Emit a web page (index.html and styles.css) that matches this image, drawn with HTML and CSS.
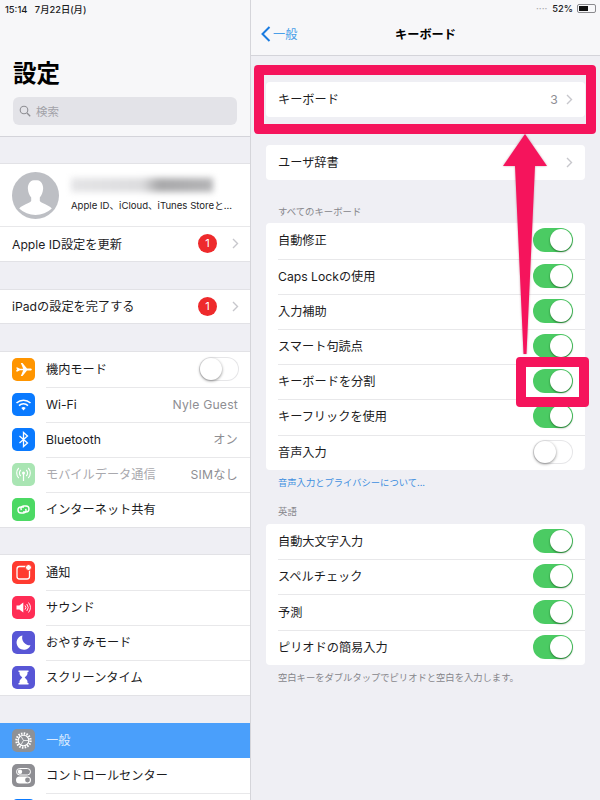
FILE: index.html
```html
<!DOCTYPE html>
<html lang="ja">
<head>
    <meta charset="UTF-8">
    <meta name="viewport" content="width=device-width, initial-scale=1.0">
    <title>キーボード</title>
    <link rel="stylesheet" href="styles.css">
</head>
<body>
<div class="screen">
    <div class="sidebar">
        <div class="sideHead">
            <div class="status">15:14 &nbsp; 7月22日(月)</div>
            <h1>設定</h1>
            <div class="search">
                <svg width="12" height="12" viewBox="0 0 12 12"><circle cx="5" cy="5" r="3.8" fill="none" stroke="#8e8e93" stroke-width="1.1"/><path d="M8 8l3.2 3.2" stroke="#8e8e93" stroke-width="1.3"/></svg>
                <span>検索</span>
            </div>
        </div>

        <div class="group first">
            <div class="profile">
                <svg class="avatar" width="47" height="47" viewBox="0 0 47 47">
                    <circle cx="23.5" cy="23.5" r="23.5" fill="#bdbfc4"/>
                    <path d="M23.5 8c-5.2 0-8 4-7.6 9 .3 3.400 1.500 6.500 3.300 8.500v3.500c-1 2-8.500 3.500-12 7.500a23.500 23.500 0 0 0 32.600 0c-3.500-4-11-5.500-12-7.500v-3.500c1.800-2 3-5.100 3.300-8.500.4-5-2.400-9-7.600-9z" fill="#fff"/>
                </svg>
                <div class="profileText">
                    <div class="blurName"></div>
                    <div class="profileSub">Apple ID、iCloud、iTunes Storeと...</div>
                </div>
            </div>
            <div class="row plain">
                <span class="label">Apple ID設定を更新</span>
                <span class="badge">1</span>
                <svg class="chev" width="7" height="11" viewBox="0 0 7 11"><path d="M1 1l4.500 4.500L1 10" fill="none" stroke="#c7c7cc" stroke-width="1.4"/></svg>
            </div>
        </div>

        <div class="group g2">
            <div class="row plain">
                <span class="label">iPadの設定を完了する</span>
                <span class="badge">1</span>
                <svg class="chev" width="7" height="11" viewBox="0 0 7 11"><path d="M1 1l4.500 4.500L1 10" fill="none" stroke="#c7c7cc" stroke-width="1.4"/></svg>
            </div>
        </div>

        <div class="group g3">
            <div class="row">
                <svg class="ico" viewBox="0 0 23 23"><rect width="23" height="23" rx="5" fill="#ff9500"/><path d="M4 10l1-.8 3 1.600 3.200-.1L8.800 5h1.700l4.500 5.500 3-.1c1.300 0 1.800.6 1.800 1.100s-.5 1.100-1.800 1.100l-3-.1L10.500 18H8.800l2.400-5.700-3.200-.1-3 1.600-1-.8 1.200-2z" fill="#fff"/></svg>
                <span class="label">機内モード</span>
                <span class="toggle off"></span>
            </div>
            <div class="row">
                <svg class="ico" viewBox="0 0 23 23"><rect width="23" height="23" rx="5" fill="#0a7aff"/><g fill="none" stroke="#fff" stroke-width="1.500"><path d="M4.500 10a10 10 0 0 1 14 0"/><path d="M7 12.600a6.500 6.500 0 0 1 9 0"/></g><path d="M9.300 15a3.200 3.200 0 0 1 4.400 0l-2.200 2.400z" fill="#fff"/></svg>
                <span class="label">Wi-Fi</span>
                <span class="value">Nyle Guest</span>
            </div>
            <div class="row">
                <svg class="ico" viewBox="0 0 23 23"><rect width="23" height="23" rx="5" fill="#0a7aff"/><path d="M7.500 8l8 7-4 3.500v-14l4 3.500-8 7" fill="none" stroke="#fff" stroke-width="1.300"/></svg>
                <span class="label">Bluetooth</span>
                <span class="value">オン</span>
            </div>
            <div class="row">
                <svg class="ico" viewBox="0 0 23 23"><rect width="23" height="23" rx="5" fill="#a9e5b3"/><circle cx="11.500" cy="10" r="1.500" fill="#fff"/><path d="M11.500 11v7" stroke="#fff" stroke-width="1.200"/><g fill="none" stroke="#fff" stroke-width="1.100"><path d="M8.800 13a4 4 0 0 1 0-6M14.200 7a4 4 0 0 1 0 6M6.800 15a7 7 0 0 1 0-10M16.200 5a7 7 0 0 1 0 10"/></g></svg>
                <span class="label dim">モバイルデータ通信</span>
                <span class="value">SIMなし</span>
            </div>
            <div class="row">
                <svg class="ico" viewBox="0 0 23 23"><rect width="23" height="23" rx="5" fill="#4cd964"/><g fill="none" stroke="#fff" stroke-width="1.400"><path d="M12 9H9a3 3 0 0 0 0 6h2.500a2.500 2.500 0 0 0 2-4"/><path d="M11 14h3a3 3 0 0 0 0-6h-2.500a2.500 2.500 0 0 0-2 4"/></g></svg>
                <span class="label">インターネット共有</span>
            </div>
        </div>

        <div class="group g4">
            <div class="row">
                <svg class="ico" viewBox="0 0 23 23"><rect width="23" height="23" rx="5" fill="#ff3b30"/><rect x="5" y="5.500" width="12.500" height="12.500" rx="2.500" fill="none" stroke="#fff" stroke-width="1.300"/><circle cx="16.500" cy="6.500" r="3" fill="#fff" stroke="#ff3b30"/></svg>
                <span class="label">通知</span>
            </div>
            <div class="row">
                <svg class="ico" viewBox="0 0 23 23"><rect width="23" height="23" rx="5" fill="#ff2d55"/><path d="M4.500 9.500h2.800l4-3v10l-4-3H4.500z" fill="#fff"/><g fill="none" stroke="#fff" stroke-width=".9"><path d="M13 9.500a3 3 0 0 1 0 4M14.800 8a5.500 5.500 0 0 1 0 7M16.500 6.500a8 8 0 0 1 0 10"/></g></svg>
                <span class="label">サウンド</span>
            </div>
            <div class="row">
                <svg class="ico" viewBox="0 0 23 23"><rect width="23" height="23" rx="5" fill="#5856d6"/><path d="M10.500 4.500a7.200 7.200 0 1 0 8 9.700A7.500 7.500 0 0 1 10.500 4.500z" fill="#fff"/></svg>
                <span class="label">おやすみモード</span>
            </div>
            <div class="row">
                <svg class="ico" viewBox="0 0 23 23"><rect width="23" height="23" rx="5" fill="#5856d6"/><path d="M6.500 4.500h10v1.500h-1v1.500c0 2-2.200 3-2.800 4 .6 1 2.800 2 2.800 4v1.500h1v1.500h-10V17h1v-1.500c0-2 2.200-3 2.800-4-.6-1-2.800-2-2.800-4V6h-1z" fill="#fff"/></svg>
                <span class="label">スクリーンタイム</span>
            </div>
        </div>

        <div class="group g5">
            <div class="row selected">
                <svg class="ico" viewBox="0 0 23 23"><rect width="23" height="23" rx="5" fill="#8e9196"/><circle cx="11.500" cy="11.500" r="7" fill="none" stroke="#fff" stroke-width="2.400" stroke-dasharray="1.500 1.250"/><circle cx="11.500" cy="11.500" r="5.300" fill="none" stroke="#fff" stroke-width="1.100"/><path d="M11.500 11.500L9 7.300M11.500 11.500L9 15.700M11.500 11.500h5" stroke="#fff" stroke-width=".8"/></svg>
                <span class="label">一般</span>
            </div>
            <div class="row">
                <svg class="ico" viewBox="0 0 23 23"><rect width="23" height="23" rx="5" fill="#8e8e93"/><rect x="4.500" y="4.500" width="14" height="6.500" rx="3.250" fill="none" stroke="#fff"/><circle cx="8" cy="7.750" r="2.200" fill="#fff"/><rect x="4" y="12.500" width="15" height="7" rx="3.500" fill="#fff"/><circle cx="15.500" cy="16" r="2.400" fill="#8e8e93"/></svg>
                <span class="label">コントロールセンター</span>
            </div>
            <div class="row">
                <svg class="ico" viewBox="0 0 23 23"><rect width="23" height="23" rx="5" fill="#0a7aff"/></svg>
            </div>
        </div>
    </div>

    <div class="detail">
        <div class="navBar">
            <div class="statusRight">
                <span class="dots">····</span>
                <span>52%</span>
                <span class="battery"><span class="batteryFill"></span></span>
            </div>
            <div class="navMain">
                <div class="back">
                    <svg width="10" height="16" viewBox="0 0 10 16"><path d="M8.500 1L1.500 8l7 7" fill="none" stroke="#1a7be0" stroke-width="2"/></svg>
                    <span>一般</span>
                </div>
                <div class="navTitle">キーボード</div>
            </div>
        </div>

        <div class="content">
            <div class="card">
                <div class="row">
                    <span class="label">キーボード</span>
                    <span class="value">3</span>
                    <svg class="chev" width="7" height="11" viewBox="0 0 7 11"><path d="M1 1l4.500 4.500L1 10" fill="none" stroke="#c7c7cc" stroke-width="1.400"/></svg>
                </div>
            </div>
            <div class="card dict">
                <div class="row">
                    <span class="label">ユーザ辞書</span>
                    <svg class="chev" width="7" height="11" viewBox="0 0 7 11"><path d="M1 1l4.500 4.500L1 10" fill="none" stroke="#c7c7cc" stroke-width="1.400"/></svg>
                </div>
            </div>

            <div class="sectionHead">すべてのキーボード</div>
            <div class="card">
                <div class="row"><span class="label">自動修正</span><span class="toggle"></span></div>
                <div class="row"><span class="label">Caps Lockの使用</span><span class="toggle"></span></div>
                <div class="row"><span class="label">入力補助</span><span class="toggle"></span></div>
                <div class="row"><span class="label">スマート句読点</span><span class="toggle"></span></div>
                <div class="row"><span class="label">キーボードを分割</span><span class="toggle"></span></div>
                <div class="row"><span class="label">キーフリックを使用</span><span class="toggle"></span></div>
                <div class="row"><span class="label">音声入力</span><span class="toggle off"></span></div>
            </div>
            <div class="sectionFoot link">音声入力とプライバシーについて...</div>

            <div class="sectionHead en">英語</div>
            <div class="card">
                <div class="row"><span class="label">自動大文字入力</span><span class="toggle"></span></div>
                <div class="row"><span class="label">スペルチェック</span><span class="toggle"></span></div>
                <div class="row"><span class="label">予測</span><span class="toggle"></span></div>
                <div class="row"><span class="label">ピリオドの簡易入力</span><span class="toggle"></span></div>
            </div>
            <div class="sectionFoot">空白キーをダブルタップでピリオドと空白を入力します。</div>
        </div>
    </div>

    <!-- red annotations over the screenshot -->
    <div class="markBig"></div>
    <div class="markSmall"></div>
    <svg class="arrow" width="60" height="240" viewBox="0 0 60 240">
        <path d="M30 1L52 33H40L31.500 221h-3L20 33H8z" fill="#f5145c"/>
    </svg>
</div>
</body>
</html>
```

FILE: styles.css
```css
* {
    margin: 0;
    padding: 0;
    box-sizing: border-box;
}
body {
    font-family: Inter, "Noto Sans CJK JP", sans-serif;
    font-size: 12.2px;
    color: #1c1c1e;
    background: #efeff4;
}
.screen {
    position: relative;
    display: flex;
    width: 600px;
    height: 800px;
    overflow: hidden;
}

/* left column */
.sidebar {
    width: 251px;
    height: 800px;
    flex-shrink: 0;
    background: #efeff4;
    border-right: 1px solid #d5d5da;
}
.sideHead {
    height: 137px;
    padding: 4px 13px 0 13px;
    background: #f7f7f9;
    border-bottom: 1px solid #d4d4da;
}
.status {
    margin-left: -8px;
    font-size: 9.3px;
    font-weight: 500;
    line-height: 11px;
}
h1 {
    margin-top: 41px;
    font-size: 23.5px;
    line-height: 35px;
    font-weight: 700;
    color: #000;
}
.search {
    display: flex;
    align-items: center;
    gap: 5px;
    height: 28px;
    margin-top: 6px;
    padding-left: 6px;
    background: #e3e3e8;
    border-radius: 6px;
    color: #a2a2a8;
    font-size: 11.5px;
}
.group {
    background: #fff;
    border-top: 1px solid #e2e2e6;
    border-bottom: 1px solid #e2e2e6;
}
.group.first { margin-top: 26px; }
.g2 { margin-top: 27px; }
.g3 { margin-top: 27px; }
.g4 { margin-top: 26px; }
.g5 {
    margin-top: 27px;
    border: 0;
}
.row {
    position: relative;
    display: flex;
    align-items: center;
    height: 35px;
    padding: 0 12px 1px 12px;
}
.row + .row::before {
    content: "";
    position: absolute;
    top: 0;
    right: 0;
    left: 46px;
    border-top: 1px solid #e8e8ea;
}
.row.plain { height: 34px; }
.g2 .row.plain { height: 33px; }
.label {
    flex: 1;
    white-space: nowrap;
}
.dim { color: #a9a9ae; }
.value {
    color: #8e8e93;
    letter-spacing: .2px;
}
.ico {
    width: 23px;
    height: 23px;
    margin-right: 11px;
    flex-shrink: 0;
}
.selected {
    background: #4a9ffb;
    color: #dcecff;
}
.row.selected + .row::before { display: none; }
.profile {
    display: flex;
    align-items: center;
    height: 63px;
    padding-left: 12px;
    border-bottom: 1px solid #e8e8ea;
}
.avatar { flex-shrink: 0; }
.profileText {
    margin-left: 12px;
    min-width: 0;
}
.blurName {
    width: 142px;
    height: 14px;
    background: linear-gradient(90deg, #e4e4e6 0%, #dcdcde 50%, #a8a8aa 62%, #b4b4b6 100%);
    filter: blur(3px);
}
.profileSub {
    margin-top: 7px;
    font-size: 9.6px;
    line-height: 13px;
    white-space: nowrap;
}
.badge {
    width: 19px;
    height: 19px;
    margin-right: 15px;
    border-radius: 50%;
    background: #ee2a2c;
    color: #fff;
    font-size: 11px;
    line-height: 19px;
    text-align: center;
}
.chev { flex-shrink: 0; }
.sidebar .chev { margin-right: -1px; }

/* right column */
.detail {
    flex: 1;
    min-width: 0;
}
.navBar {
    height: 56px;
    padding: 3px 4px 0 10px;
    background: #f7f7f9;
    border-bottom: 1px solid #d4d4da;
}
.statusRight {
    display: flex;
    justify-content: flex-end;
    align-items: center;
    gap: 4px;
    height: 11px;
    font-size: 9.3px;
    font-weight: 500;
}
.dots {
    color: #a8a8ac;
    margin-right: 1px;
}
.battery {
    width: 19px;
    height: 9px;
    padding: 1px;
    border: 1px solid #8a8a8e;
    border-radius: 2px;
}
.batteryFill {
    display: block;
    width: 9px;
    height: 100%;
    background: #111;
}
.navMain {
    position: relative;
    display: flex;
    align-items: center;
    height: 40px;
}
.back {
    display: flex;
    align-items: center;
    gap: 2px;
    color: #4a9fe8;
    font-size: 12.2px;
}
.navTitle {
    position: absolute;
    left: 0;
    right: 6px;
    text-align: center;
    font-weight: 700;
    color: #000;
}
.content {
    padding: 26px 15px 0 15px;
}
.card {
    background: #fff;
    border-radius: 4px;
    overflow: hidden;
}
.content .row + .row::before { left: 12px; }
.content .row { height: 35.2px; }
.content .card .value { margin-right: 8px; }
.dict { margin-top: 28px; }
.sectionHead {
    margin-top: 23px;
    padding: 0 0 2px 12px;
    color: #86868b;
    font-size: 9.4px;
    line-height: 18px;
}
.sectionHead.en {
    margin-top: 13.4px;
    padding-bottom: 3px;
}
.sectionFoot {
    padding: 6px 12px 0 12px;
    color: #86868b;
    font-size: 9.3px;
    line-height: 14px;
}
.link { color: #3f8fe0; }

/* switches */
.toggle {
    position: relative;
    width: 40px;
    height: 24px;
    flex-shrink: 0;
    border-radius: 12px;
    background: #4bcb63;
}
.toggle::after {
    content: "";
    position: absolute;
    top: 1px;
    right: 1px;
    width: 22px;
    height: 22px;
    border-radius: 50%;
    background: #fff;
    box-shadow: 0 1px 2px rgba(0, 40, 0, .55);
}
.toggle.off {
    background: #fff;
    box-shadow: inset 0 0 0 1px #e6e6e8;
}
.toggle.off::after {
    right: auto;
    left: 1px;
    box-shadow: 0 1px 3px rgba(0, 0, 0, .45);
}
.sidebar .toggle { margin-right: -1px; }

/* annotations */
.markBig {
    position: absolute;
    top: 65px;
    left: 254px;
    width: 342px;
    height: 69px;
    border: 10px solid #f5145c;
    border-radius: 4px;
}
.markSmall {
    position: absolute;
    top: 357px;
    left: 516px;
    width: 73px;
    height: 50px;
    border: 10px solid #f5145c;
    border-radius: 4px;
}
.arrow {
    position: absolute;
    top: 133px;
    left: 495px;
    filter: drop-shadow(0 0 1px rgba(120, 0, 40, .35));
}
```
